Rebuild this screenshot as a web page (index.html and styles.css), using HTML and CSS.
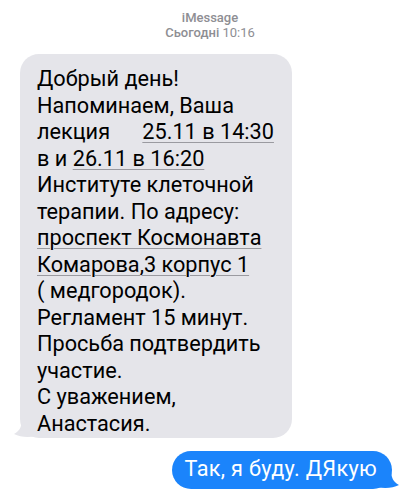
FILE: index.html
```html
<!DOCTYPE html>
<html lang="ru">
<head>
<meta charset="utf-8">
<link rel="stylesheet" href="styles.css">
</head>
<body>
<div class="screen">
  <header class="meta">
    <div class="service">iMessage</div>
    <div class="date"><b>Сьогодні</b> 10:16</div>
  </header>
  <div class="row in">
    <div class="bubble gray">
      <p class="msg">Добрый день!
Напоминаем, Ваша
лекция      <span class="link">25.11 в 14:30</span>
в и <span class="link">26.11 в 16:20</span>
Институте клеточной
терапии. По адресу:
<span class="link">проспект Космонавта</span>
<span class="link">Комарова,3 корпус 1</span>
( медгородок).
Регламент 15 минут.
Просьба подтвердить
участие.
С уважением,
Анастасия.</p>
      <svg class="tail tail-l" width="22" height="20" viewBox="0 0 22 20"><path d="M22 0 L22 18 C14 20 6 19 0 16 C6 13 8 8 8 0 Z" fill="#e5e5ea"/></svg>
    </div>
  </div>
  <div class="row out">
    <div class="bubble blue">
      <p class="msg reply">Так, я буду. ДЯкую</p>
      <svg class="tail tail-r" width="22" height="20" viewBox="0 0 22 20"><path d="M0 0 L0 18 C8 20 16 19 22 16 C16 13 14 8 14 0 Z" fill="#1b84fb"/></svg>
    </div>
  </div>
</div>
</body>
</html>
```
FILE: styles.css
```css
html, body { margin: 0; padding: 0; background: #fff; }
body { font-family: Roboto, "Noto Sans", sans-serif; }
.screen { width: 412px; height: 500px; overflow: hidden; }
.meta { text-align: center; color: #8e8e93; font-size: 13px; line-height: 15px; padding: 10px 0 0 8px; }
.meta .service { font-weight: 500; }
.meta .date b { font-weight: 500; }
.row { display: flex; }
.row.in { padding: 14px 0 0 20px; }
.row.out { padding: 13px 20px 0 0; justify-content: flex-end; }
.bubble { position: relative; border-radius: 19px; }
.gray { background: #e5e5ea; color: #000; width: 272px; padding: 12px 0 1px 17px; box-sizing: border-box; }
.blue { background: #1b84fb; color: #fff; padding: 5px 15px 6px 13px; }
.msg { margin: 0; white-space: pre; font-size: 21.7px; line-height: 26.5px; }
.msg.reply { letter-spacing: 0.3px; }
.link { text-decoration: underline; text-decoration-color: #9a9aa0; text-decoration-thickness: 1px; text-underline-offset: 3px; }
.tail { position: absolute; bottom: 0; }
.tail-l { left: -6px; }
.tail-r { right: -7px; }
```
